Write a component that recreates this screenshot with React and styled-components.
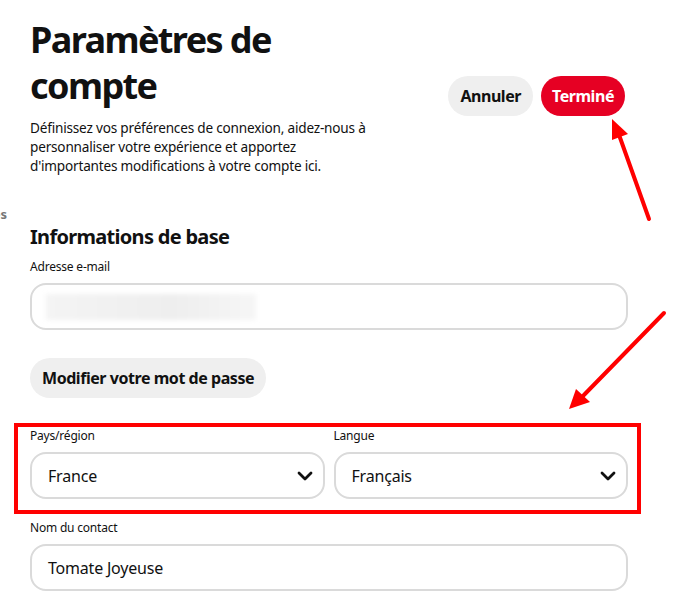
import styled, { createGlobalStyle } from "styled-components"

const font = `"Noto Sans", "Open Sans", sans-serif`

const GlobalStyle = createGlobalStyle`
  html, body {
    margin: 0;
    padding: 0;
    background: #ffffff;
    font-family: ${font};
    color: #111111;
  }
`

const Page = styled.div`
  position: relative;
  width: 697px;
  height: 607px;
  overflow: hidden;
  display: flex;
  background: #fff;
`

// the left menu is scrolled off screen, only the last letter of one item peeks in
const Sidebar = styled.div`
  width: 7px;
  padding-top: 205px;
  overflow: hidden;
  direction: rtl;
  white-space: nowrap;
  font-size: 13px;
  font-weight: 700;
  color: #767676;
`

const Main = styled.main`
  width: 598px;
  margin-left: 23px;
  padding-top: 17px;
`

const Header = styled.header`
  display: flex;
  justify-content: space-between;
  align-items: center;
`

const TitleBlock = styled.div`
  width: 350px;
`

const Title = styled.h1`
  margin: 0;
  font-size: 36px;
  line-height: 46px;
  font-weight: 700;
  letter-spacing: -1.6px;
`

const Description = styled.p`
  margin: 9px 0 0;
  font-size: 13.6px;
  line-height: 19px;
  letter-spacing: -0.2px;
`

const Actions = styled.div`
  display: flex;
  gap: 8px;
  margin-right: 3px;
`

const PillButton = styled.button`
  height: 40px;
  padding: 0 ${(p) => (p.primary ? "11px" : "12px")};
  border: none;
  border-radius: 20px;
  font-family: ${font};
  font-size: 16px;
  font-weight: 700;
  letter-spacing: -0.45px;
  cursor: pointer;
  background: ${(p) => (p.primary ? "#e60023" : "#efefef")};
  color: ${(p) => (p.primary ? "#ffffff" : "#111111")};
`

const Section = styled.section`
  margin-top: 50px;
`

const SectionTitle = styled.h2`
  margin: 0 0 10px;
  font-size: 20px;
  line-height: 24px;
  font-weight: 700;
  letter-spacing: -0.7px;
`

const Field = styled.div`
  display: flex;
  flex-direction: column;
  gap: 8px;
  flex: 1;
`

const Label = styled.label`
  font-size: 12px;
  line-height: 16px;
  letter-spacing: -0.2px;
`

const InputBox = styled.div`
  box-sizing: border-box;
  height: 47px;
  border: 2px solid #dadada;
  border-radius: 16px;
  display: flex;
  align-items: center;
  justify-content: space-between;
  padding: 0 10px 0 16px;
  font-size: 16px;
  letter-spacing: -0.2px;
`

const Blurred = styled.div`
  width: 210px;
  height: 26px;
  margin-left: -2px;
  background: linear-gradient(90deg, #f4f4f4, #eeeeee 60%, #f6f6f6);
  filter: blur(2px);
`

const SecondaryBlock = styled.div`
  margin-top: 28px;
`

const Row = styled.div`
  display: flex;
  gap: 9px;
  margin-top: 30px;
`

const ContactField = styled(Field)`
  margin-top: 21px;
`

const Annotation = styled.svg`
  position: absolute;
  left: 0;
  top: 0;
  pointer-events: none;
`

const Chevron = () => (
  <svg width="16" height="12" viewBox="0 0 16 12">
    <path d="M2 3 L8 9 L14 3" fill="none" stroke="#111" strokeWidth="2.8" strokeLinecap="round" strokeLinejoin="round" />
  </svg>
)

const App = () => {
  return (
    <>
      <GlobalStyle />
      <Page>
        <Sidebar>Gérer les comptes</Sidebar>
        <Main>
          <Header>
            <TitleBlock>
              <Title>Paramètres de compte</Title>
              <Description>
                Définissez vos préférences de connexion, aidez-nous à personnaliser votre expérience et apportez d'importantes modifications à votre compte ici.
              </Description>
            </TitleBlock>
            <Actions>
              <PillButton>Annuler</PillButton>
              <PillButton primary>Terminé</PillButton>
            </Actions>
          </Header>

          <Section>
            <SectionTitle>Informations de base</SectionTitle>
            <Field>
              <Label>Adresse e-mail</Label>
              <InputBox>
                <Blurred />
              </InputBox>
            </Field>

            <SecondaryBlock>
              <PillButton>Modifier votre mot de passe</PillButton>
            </SecondaryBlock>

            <Row>
              <Field>
                <Label>Pays/région</Label>
                <InputBox>
                  France
                  <Chevron />
                </InputBox>
              </Field>
              <Field>
                <Label>Langue</Label>
                <InputBox>
                  Français
                  <Chevron />
                </InputBox>
              </Field>
            </Row>

            <ContactField>
              <Label>Nom du contact</Label>
              <InputBox>Tomate Joyeuse</InputBox>
            </ContactField>
          </Section>
        </Main>

        <Annotation width="697" height="607" viewBox="0 0 697 607">
          <rect x="16" y="425" width="623" height="87" fill="none" stroke="#ff0000" strokeWidth="4" />
          <line x1="649" y1="219" x2="618" y2="132" stroke="#ff0000" strokeWidth="4" strokeLinecap="round" />
          <polygon points="612,119 628,134 612,140" fill="#ff0000" />
          <line x1="664" y1="313" x2="582" y2="397" stroke="#ff0000" strokeWidth="4" strokeLinecap="round" />
          <polygon points="569,409 576,389 590,402" fill="#ff0000" />
        </Annotation>
      </Page>
    </>
  )
}

export default App
